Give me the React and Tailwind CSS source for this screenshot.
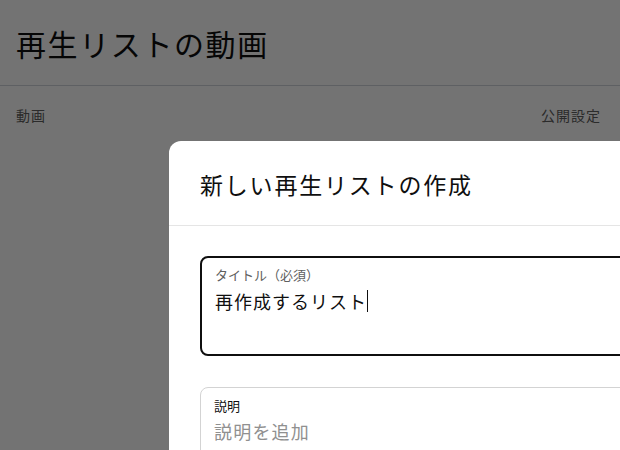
import React from 'react';

const font = { fontFamily: '"Noto Sans CJK JP", "Noto Sans", sans-serif' };

const App = () => {
  return (
    <div className="relative w-[620px] h-[450px] overflow-hidden bg-white" style={font}>
      {/* page underneath */}
      <div className="h-[86px] flex items-center px-4 border-b border-gray-300">
        <h1 className="text-[30px] tracking-[1.6px] text-[#0f0f0f] leading-none">再生リストの動画</h1>
      </div>
      <div className="h-[58px] flex items-center justify-between px-4 text-[14px] tracking-[1px] text-[#606060]">
        <span>動画</span>
        <span className="pr-[3px]">公開設定</span>
      </div>

      {/* backdrop */}
      <div className="absolute inset-0 bg-black/55" />

      {/* dialog */}
      <div className="absolute left-[169px] top-[141px] w-[520px] h-[400px] bg-white rounded-[12px]">
        <div className="h-[85px] flex items-center px-[31px] border-b border-[#e5e5e5]">
          <h2 className="text-[23px] tracking-[1.8px] text-[#0f0f0f] leading-none pt-[2px]">新しい再生リストの作成</h2>
        </div>
        <div className="px-[31px] pt-[30px] flex flex-col gap-[31px]">
          <div className="h-[100px] border-2 border-[#0f0f0f] rounded-[8px] px-[13px] pt-[7px]">
            <div className="text-[13px] text-[#606060] leading-[20px]">タイトル（必須）</div>
            <div className="text-[18px] tracking-[1px] text-[#0f0f0f] leading-[26px] mt-[3px] flex items-center">
              <span>再作成するリスト</span>
              <span className="inline-block w-px h-[22px] bg-[#0f0f0f]" />
            </div>
          </div>
          <div className="h-[100px] border border-[#d3d3d3] rounded-[8px] px-[13px] pt-[8px]">
            <div className="text-[13px] text-[#0f0f0f] leading-[20px]">説明</div>
            <div className="text-[18px] tracking-[1.2px] text-[#909090] leading-[26px] mt-[2px]">説明を追加</div>
          </div>
        </div>
      </div>
    </div>
  );
};

export default App;
